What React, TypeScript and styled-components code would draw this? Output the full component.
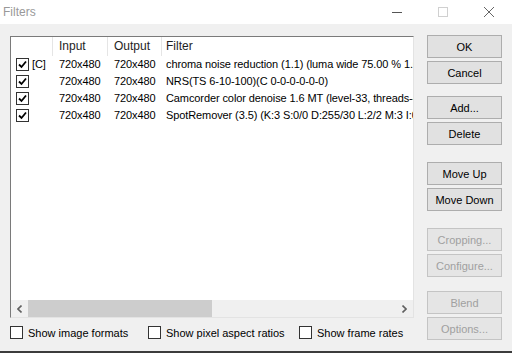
import React from "react";
import styled, { createGlobalStyle } from "styled-components";

const GlobalStyle = createGlobalStyle`
  body {
    margin: 0;
    font-family: "Liberation Sans", Arial, sans-serif;
    font-size: 11px;
    color: #000;
  }
`;

const Window = styled.div`
  width: 512px;
  height: 353px;
  background: #f0f0f0;
  display: flex;
  flex-direction: column;
  box-sizing: border-box;
  border-bottom: 2px solid #3c3c3c;
  overflow: hidden;
`;

const TitleBar = styled.div`
  height: 24px;
  background: #fff;
  display: flex;
  align-items: center;
  flex-shrink: 0;
`;

const Title = styled.div`
  padding-left: 3px;
  font-size: 12px;
  color: #999;
`;

const Controls = styled.div`
  margin-left: auto;
  display: flex;
  height: 100%;
`;

const ControlButton = styled.div`
  width: 46px;
  height: 100%;
  display: flex;
  align-items: center;
  justify-content: center;
`;

const Client = styled.div`
  flex: 1;
  display: flex;
  align-items: flex-start;
  padding: 11px 0 0 10px;
`;

const LeftColumn = styled.div`
  display: flex;
  flex-direction: column;
  margin-top: 1px;
`;

const List = styled.div`
  width: 404px;
  height: 282px;
  box-sizing: border-box;
  background: #fff;
  border: 1px solid;
  border-color: #7a7a7a #e3e3e3 #e3e3e3 #7a7a7a;
  display: flex;
  flex-direction: column;
  overflow: hidden;
`;

const Grid = styled.div<{ $height: number }>`
  display: grid;
  grid-template-columns: 42px 55px 54px 1fr;
  height: ${({ $height }) => $height}px;
  line-height: ${({ $height }) => $height}px;
  white-space: nowrap;
`;

const HeadCell = styled.div<{ $pad?: number; $last?: boolean }>`
  padding-left: ${({ $pad }) => $pad ?? 6}px;
  border-right: ${({ $last }) => ($last ? "none" : "1px solid #e5e5e5")};
  font-size: 12px;
  color: #1e1e1e;
  overflow: hidden;
`;

const Cell = styled.div<{ $pad?: number }>`
  padding-left: ${({ $pad }) => $pad ?? 6}px;
  overflow: hidden;
  display: flex;
  align-items: center;
  gap: 3px;
  letter-spacing: -0.1px;
`;

const ListBody = styled.div`
  flex: 1;
`;

const Box = styled.span`
  width: 13px;
  height: 13px;
  box-sizing: border-box;
  border: 1px solid #333;
  background: #fff;
  display: inline-flex;
  align-items: center;
  justify-content: center;
  flex-shrink: 0;
`;

const ScrollBar = styled.div`
  height: 17px;
  display: flex;
  background: #f0f0f0;
  flex-shrink: 0;
`;

const ScrollArrow = styled.div`
  width: 17px;
  height: 17px;
  display: flex;
  align-items: center;
  justify-content: center;
  flex-shrink: 0;
`;

const Track = styled.div`
  flex: 1;
  display: flex;
`;

const Thumb = styled.div`
  background: #cdcdcd;
  height: 100%;
`;

const Options = styled.div`
  display: flex;
  align-items: center;
  margin-top: 8px;
  height: 13px;
`;

const Option = styled.label<{ $width: number }>`
  width: ${({ $width }) => $width}px;
  display: flex;
  align-items: center;
  gap: 5px;
  color: #000;
`;

const Buttons = styled.div`
  margin-left: 13px;
  width: 75px;
  display: flex;
  flex-direction: column;
`;

const Group = styled.div<{ $top: number }>`
  display: flex;
  flex-direction: column;
  gap: 3px;
  margin-top: ${({ $top }) => $top}px;
`;

const Button = styled.button`
  height: 23px;
  width: 75px;
  box-sizing: border-box;
  background: #e1e1e1;
  border: 1px solid #adadad;
  font-family: "Liberation Sans", Arial, sans-serif;
  font-size: 11px;
  color: #000;
  padding: 0;

  &:disabled {
    background: #e5e5e5;
    border-color: #c4c4c4;
    color: #a0a0a0;
  }
`;

const Check = () => (
  <svg width="9" height="9" viewBox="0 0 9 9">
    <path d="M1 4.5 L3.5 7 L8 1.5" stroke="#000" strokeWidth="1.8" fill="none" />
  </svg>
);

const filters = [
  { tag: "[C]", input: "720x480", output: "720x480", name: "chroma noise reduction (1.1) (luma wide 75.00 % 1.0, chroma 2)" },
  { tag: "", input: "720x480", output: "720x480", name: "NRS(TS 6-10-100)(C 0-0-0-0-0-0)" },
  { tag: "", input: "720x480", output: "720x480", name: "Camcorder color denoise 1.6 MT (level-33, threads-4)" },
  { tag: "", input: "720x480", output: "720x480", name: "SpotRemover (3.5) (K:3 S:0/0 D:255/30 L:2/2 M:3 I:0)" },
];

export default function App() {
  return (
    <>
      <GlobalStyle />
      <Window>
        <TitleBar>
          <Title>Filters</Title>
          <Controls>
            <ControlButton>
              <svg width="10" height="10" viewBox="0 0 10 10">
                <path d="M0 5.5 H10" stroke="#555" strokeWidth="1" />
              </svg>
            </ControlButton>
            <ControlButton>
              <svg width="10" height="10" viewBox="0 0 10 10">
                <rect x="0.5" y="0.5" width="9" height="9" stroke="#d0d0d0" fill="none" />
              </svg>
            </ControlButton>
            <ControlButton>
              <svg width="10" height="10" viewBox="0 0 10 10">
                <path d="M0 0 L10 10 M10 0 L0 10" stroke="#666" strokeWidth="1" />
              </svg>
            </ControlButton>
          </Controls>
        </TitleBar>

        <Client>
          <LeftColumn>
            <List>
              <Grid $height={19}>
                <HeadCell />
                <HeadCell>Input</HeadCell>
                <HeadCell>Output</HeadCell>
                <HeadCell $pad={4} $last>Filter</HeadCell>
              </Grid>
              <ListBody>
                {filters.map((f, i) => (
                  <Grid $height={17} key={i}>
                    <Cell $pad={5}>
                      <Box>
                        <Check />
                      </Box>
                      {f.tag}
                    </Cell>
                    <Cell>{f.input}</Cell>
                    <Cell>{f.output}</Cell>
                    <Cell $pad={4}>{f.name}</Cell>
                  </Grid>
                ))}
              </ListBody>
              <ScrollBar>
                <ScrollArrow>
                  <svg width="5" height="8" viewBox="0 0 5 8">
                    <path d="M4.5 0.5 L1 4 L4.5 7.5" stroke="#606060" strokeWidth="1.6" fill="none" />
                  </svg>
                </ScrollArrow>
                <Track>
                  <Thumb style={{ width: `${Math.round(367 * 0.5)}px` }} />
                </Track>
                <ScrollArrow>
                  <svg width="5" height="8" viewBox="0 0 5 8">
                    <path d="M0.5 0.5 L4 4 L0.5 7.5" stroke="#606060" strokeWidth="1.6" fill="none" />
                  </svg>
                </ScrollArrow>
              </ScrollBar>
            </List>
            <Options>
              <Option $width={138}>
                <Box />
                Show image formats
              </Option>
              <Option $width={151}>
                <Box />
                Show pixel aspect ratios
              </Option>
              <Option $width={110}>
                <Box />
                Show frame rates
              </Option>
            </Options>
          </LeftColumn>

          <Buttons>
            <Group $top={0}>
              <Button>OK</Button>
              <Button>Cancel</Button>
            </Group>
            <Group $top={12}>
              <Button>Add...</Button>
              <Button>Delete</Button>
            </Group>
            <Group $top={17}>
              <Button>Move Up</Button>
              <Button>Move Down</Button>
            </Group>
            <Group $top={17}>
              <Button disabled>Cropping...</Button>
              <Button disabled>Configure...</Button>
            </Group>
            <Group $top={14}>
              <Button disabled>Blend</Button>
              <Button disabled>Options...</Button>
            </Group>
          </Buttons>
        </Client>
      </Window>
    </>
  );
}
